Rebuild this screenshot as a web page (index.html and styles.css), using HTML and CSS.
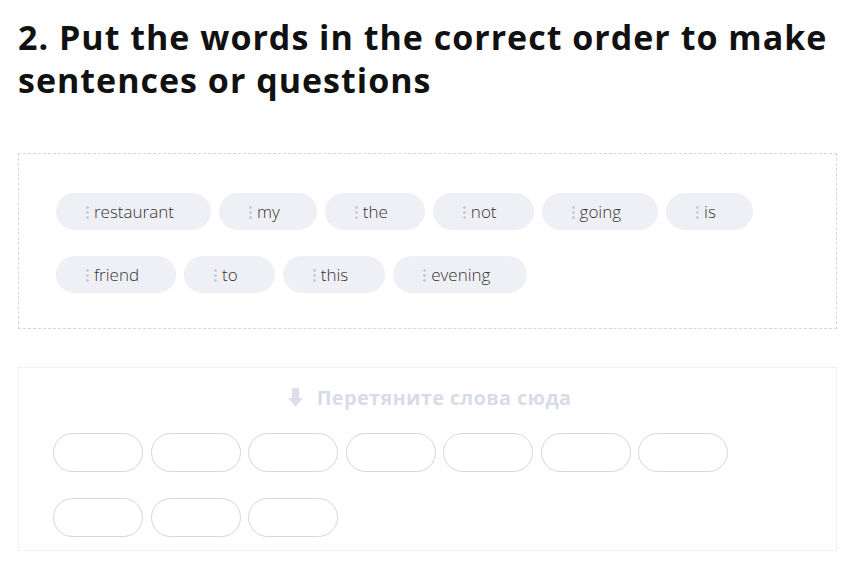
FILE: index.html
```html
<!DOCTYPE html>
<html lang="ru">
<head>
    <meta charset="UTF-8">
    <meta name="viewport" content="width=device-width, initial-scale=1.0">
    <title>Упражнение 2</title>
    <link rel="stylesheet" href="styles.css">
</head>
<body>
    <div class="task">
        <h2 class="task-title">2. Put the words in the correct order to make sentences or questions</h2>

        <!-- Слова для перетаскивания -->
        <div class="word-bank">
            <span class="word"><i class="handle"></i>restaurant</span>
            <span class="word"><i class="handle"></i>my</span>
            <span class="word"><i class="handle"></i>the</span>
            <span class="word"><i class="handle"></i>not</span>
            <span class="word"><i class="handle"></i>going</span>
            <span class="word"><i class="handle"></i>is</span>
            <span class="word"><i class="handle"></i>friend</span>
            <span class="word"><i class="handle"></i>to</span>
            <span class="word"><i class="handle"></i>this</span>
            <span class="word"><i class="handle"></i>evening</span>
        </div>

        <!-- Зона ответа -->
        <div class="drop-zone">
            <div class="drop-hint">
                <svg width="15" height="19" viewBox="0 0 15 19"><path d="M4 0h7v10h4l-7.5 9-7.5-9h4z" fill="#dcdfe9"/></svg>
                <span>Перетяните слова сюда</span>
            </div>
            <div class="slots">
                <span class="slot"></span>
                <span class="slot"></span>
                <span class="slot"></span>
                <span class="slot"></span>
                <span class="slot"></span>
                <span class="slot"></span>
                <span class="slot"></span>
                <span class="slot"></span>
                <span class="slot"></span>
                <span class="slot"></span>
            </div>
        </div>
    </div>
</body>
</html>
```

FILE: styles.css
```css
body {
    margin: 0;
    padding: 0;
    font-family: "Open Sans", "Noto Sans", sans-serif;
    background: #fff;
    color: #222;
}
.task {
    padding: 16px 29px 0 18px;
}
.task-title {
    margin: 0 0 51px;
    font-size: 34px;
    line-height: 43px;
    font-weight: 700;
    color: #111;
    letter-spacing: 1px;
}
.word-bank {
    border: 1px dashed #d4d7e0;
    padding: 39px 30px 35px 37px;
    display: flex;
    flex-wrap: wrap;
    gap: 26px 8px;
    margin-bottom: 38px;
}
.word {
    display: inline-flex;
    align-items: center;
    height: 37px;
    padding: 0 37px 0 30px;
    border-radius: 19px;
    background: #eff0f5;
    font-size: 17px;
    font-weight: 300;
    color: #333;
}
.handle {
    width: 3px;
    height: 14px;
    margin-right: 5px;
    background: radial-gradient(circle, #c8cad0 1.2px, transparent 1.5px) 0 0 / 3px 5px repeat-y;
}
.drop-zone {
    border: 1px dotted #e3e5eb;
    padding: 15px 30px 13px 34px;
}
.drop-hint {
    display: flex;
    justify-content: center;
    align-items: center;
    gap: 14px;
    font-size: 20px;
    font-weight: 700;
    letter-spacing: 0.3px;
    color: #d8dce8;
    height: 28px;
    margin-bottom: 22px;
}
.slots {
    display: flex;
    flex-wrap: wrap;
    gap: 26px 7.5px;
    max-width: 690px;
}
.slot {
    width: 88px;
    height: 37px;
    border: 1px solid #d6d6dc;
    border-radius: 20px;
}
```
